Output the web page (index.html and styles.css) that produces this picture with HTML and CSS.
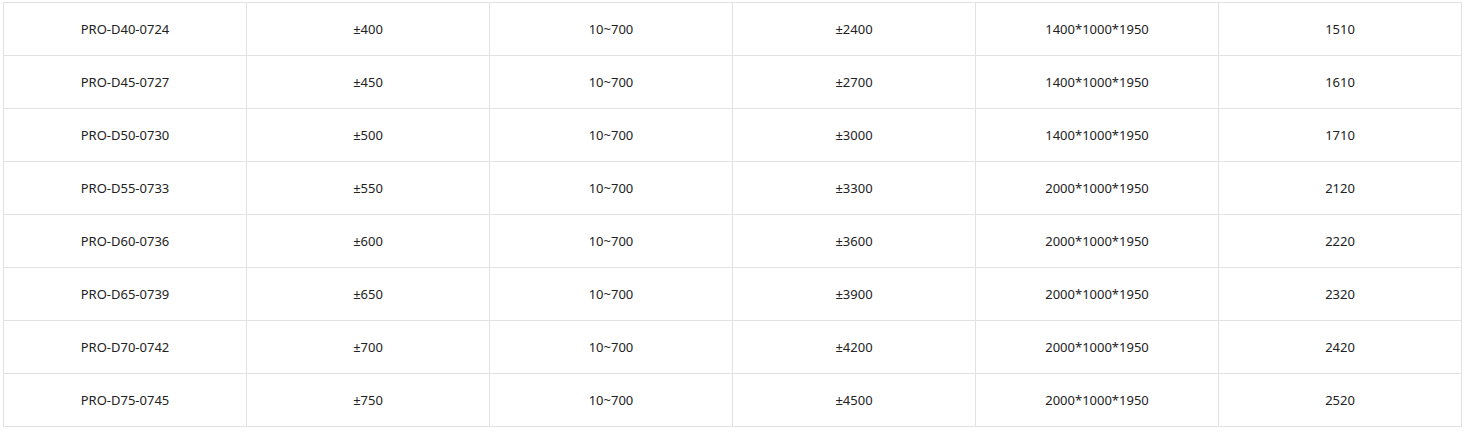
FILE: index.html
```html
<!DOCTYPE html>
<html>
<head>
<meta charset="utf-8">
<link rel="stylesheet" href="styles.css">
</head>
<body>
<div class="wrap">
<table class="spec">
<tbody>
<tr><td>PRO-D40-0724</td><td>±400</td><td>10~700</td><td>±2400</td><td>1400*1000*1950</td><td>1510</td></tr>
<tr><td>PRO-D45-0727</td><td>±450</td><td>10~700</td><td>±2700</td><td>1400*1000*1950</td><td>1610</td></tr>
<tr><td>PRO-D50-0730</td><td>±500</td><td>10~700</td><td>±3000</td><td>1400*1000*1950</td><td>1710</td></tr>
<tr><td>PRO-D55-0733</td><td>±550</td><td>10~700</td><td>±3300</td><td>2000*1000*1950</td><td>2120</td></tr>
<tr><td>PRO-D60-0736</td><td>±600</td><td>10~700</td><td>±3600</td><td>2000*1000*1950</td><td>2220</td></tr>
<tr><td>PRO-D65-0739</td><td>±650</td><td>10~700</td><td>±3900</td><td>2000*1000*1950</td><td>2320</td></tr>
<tr><td>PRO-D70-0742</td><td>±700</td><td>10~700</td><td>±4200</td><td>2000*1000*1950</td><td>2420</td></tr>
<tr><td>PRO-D75-0745</td><td>±750</td><td>10~700</td><td>±4500</td><td>2000*1000*1950</td><td>2520</td></tr>
</tbody>
</table>
</div>
</body>
</html>
```

FILE: styles.css
```css
html, body {
  margin: 0;
  padding: 0;
  background: #fff;
}
.wrap {
  padding: 2px 0 0 3px;
}
.spec {
  border-collapse: collapse;
  width: 1459px;
  table-layout: fixed;
  font-family: "Noto Sans", "Open Sans", sans-serif;
  font-size: 13px;
  color: #222;
}
.spec td {
  border: 1px solid #e2e2e2;
  height: 53px;
  padding: 0;
  text-align: center;
  vertical-align: middle;
  box-sizing: border-box;
}
```
